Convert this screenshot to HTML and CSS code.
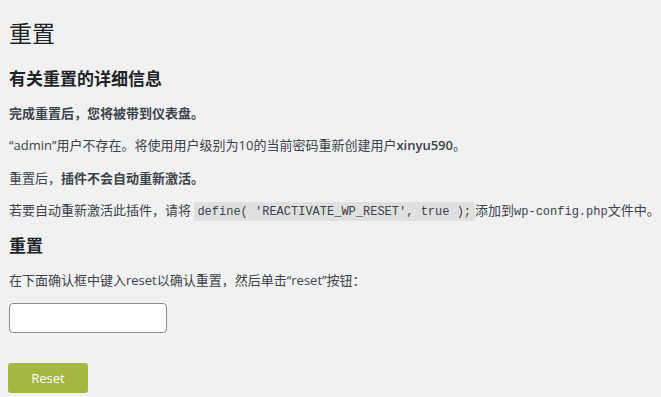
FILE: index.html
```html
<!DOCTYPE html>
<html lang="zh-CN">
<head>
    <meta charset="UTF-8">
    <title>重置</title>
    <link rel="stylesheet" href="styles.css">
</head>
<body>
    <div class="wrap">
        <h1>重置</h1>
        <h2>有关重置的详细信息</h2>
        <p><b>完成重置后，您将被带到仪表盘。</b></p>
        <p>“admin”用户不存在。将使用用户级别为10的当前密码重新创建用户<b>xinyu590</b>。</p>
        <p>重置后，<b>插件不会自动重新激活。</b></p>
        <p class="nowrap">若要自动重新激活此插件，请将 <code>define( 'REACTIVATE_WP_RESET', true );</code>添加到<span class="mono">wp-config.php</span>文件中。</p>
        <h2 class="second">重置</h2>
        <p>在下面确认框中键入reset以确认重置，然后单击“reset”按钮：</p>
        <div class="field"><input type="text" class="confirm"></div>
        <div class="actions"><button class="reset-btn">Reset</button></div>
    </div>
</body>
</html>
```

FILE: styles.css
```css
html, body {
    margin: 0;
    padding: 0;
    background: #f1f1f1;
}
body {
    font-family: "Open Sans", "Noto Sans CJK SC", sans-serif;
    font-size: 13px;
    line-height: 1.5;
    color: #3c434a;
    overflow: hidden;
}
.wrap {
    padding: 10px 0 0 9px;
}
.wrap h1 {
    font-size: 23px;
    font-weight: 400;
    line-height: 1.3;
    margin: 0;
    padding: 9px 0 4px;
    color: #1d2327;
}
.wrap h2 {
    font-size: 17px;
    font-weight: 600;
    line-height: 1.3;
    margin: 15px 0 14px;
    color: #1d2327;
}
.wrap h2.second {
    margin: 14px 0 13px;
}
.wrap p {
    margin: 13px 0;
}
.wrap .nowrap {
    white-space: nowrap;
}
.wrap b {
    font-weight: 600;
}
.wrap code {
    font-family: "Liberation Mono", monospace;
    font-size: 12px;
    background: rgba(0, 0, 0, 0.07);
    padding: 3px 4px 2px 3px;
}
.wrap .mono {
    font-family: "Liberation Mono", monospace;
    font-size: 12px;
}
.field {
    margin-top: 11px;
}
.confirm {
    display: block;
    box-sizing: border-box;
    width: 158px;
    height: 30px;
    border: 1px solid #8c8f94;
    border-radius: 4px;
    background: #fff;
    margin: 0;
}
.actions {
    margin-top: 30px;
}
.reset-btn {
    display: block;
    width: 80px;
    height: 30px;
    border: none;
    border-radius: 3px;
    background: #a5b741;
    color: #fff;
    font-family: "Open Sans", sans-serif;
    font-size: 13px;
    margin-left: -1px;
}
```
